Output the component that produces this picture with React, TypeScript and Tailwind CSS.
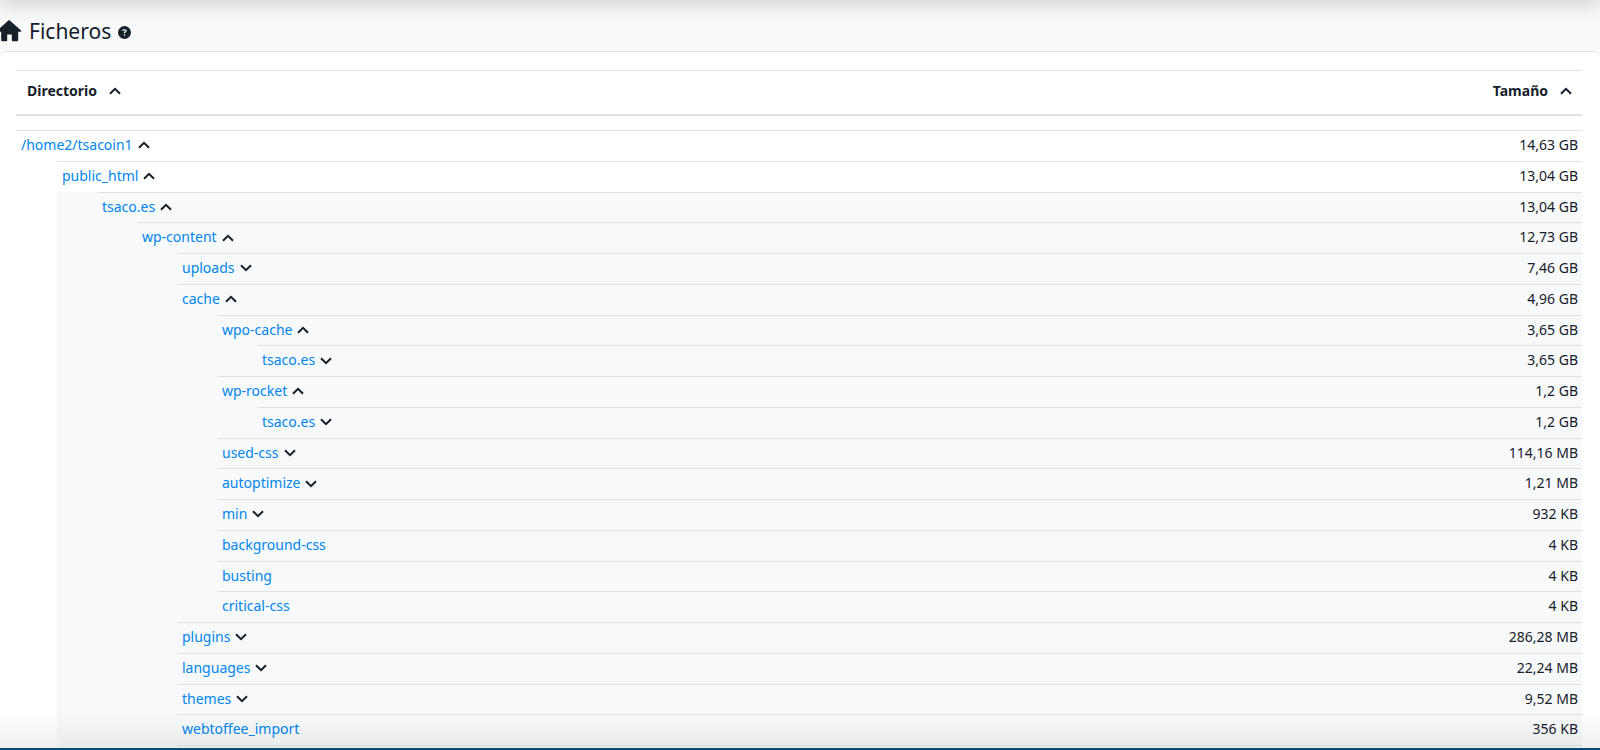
import React from 'react';
import { FaCircleQuestion } from 'react-icons/fa6';

type Entry = {
    name: string;
    size: string;
    depth: number;
    state?: 'open' | 'closed';
};

const entries: Entry[] = [
    { name: '/home2/tsacoin1', size: '14,63 GB', depth: 0, state: 'open' },
    { name: 'public_html', size: '13,04 GB', depth: 1, state: 'open' },
    { name: 'tsaco.es', size: '13,04 GB', depth: 2, state: 'open' },
    { name: 'wp-content', size: '12,73 GB', depth: 3, state: 'open' },
    { name: 'uploads', size: '7,46 GB', depth: 4, state: 'closed' },
    { name: 'cache', size: '4,96 GB', depth: 4, state: 'open' },
    { name: 'wpo-cache', size: '3,65 GB', depth: 5, state: 'open' },
    { name: 'tsaco.es', size: '3,65 GB', depth: 6, state: 'closed' },
    { name: 'wp-rocket', size: '1,2 GB', depth: 5, state: 'open' },
    { name: 'tsaco.es', size: '1,2 GB', depth: 6, state: 'closed' },
    { name: 'used-css', size: '114,16 MB', depth: 5, state: 'closed' },
    { name: 'autoptimize', size: '1,21 MB', depth: 5, state: 'closed' },
    { name: 'min', size: '932 KB', depth: 5, state: 'closed' },
    { name: 'background-css', size: '4 KB', depth: 5 },
    { name: 'busting', size: '4 KB', depth: 5 },
    { name: 'critical-css', size: '4 KB', depth: 5 },
    { name: 'plugins', size: '286,28 MB', depth: 4, state: 'closed' },
    { name: 'languages', size: '22,24 MB', depth: 4, state: 'closed' },
    { name: 'themes', size: '9,52 MB', depth: 4, state: 'closed' },
    { name: 'webtoffee_import', size: '356 KB', depth: 4 },
];

const indents = ['ml-0', 'ml-[41px]', 'ml-10', 'ml-20', 'ml-30', 'ml-40', 'ml-50'];

const Chevron: React.FC<{ down?: boolean }> = ({ down }) => (
    <svg viewBox="0 0 12 8" className="w-3 h-2" fill="none" stroke="currentColor" strokeWidth="2">
        <path d={down ? 'M1 1.2 6 6.2 11 1.2' : 'M1 6.8 6 1.8 11 6.8'} />
    </svg>
);

const EntryRow: React.FC<{ entry: Entry }> = ({ entry }) => {
    // everything below public_html sits on the grey block
    const shaded = entry.depth >= 2;

    return (
        <tr className="leading-relaxed">
            <td className="p-0">
                <div className={shaded ? 'ml-[41px] bg-[#f8f9fa]' : ''}>
                    <div
                        className={`flex items-center gap-1 border-t border-[#dee2e6] pt-[3px] pb-1 pl-[5px] ${indents[entry.depth]}`}
                    >
                        <a href="#" className="text-[#0086ee]">
                            {entry.name}
                        </a>
                        {entry.state && (
                            <button
                                type="button"
                                aria-label={entry.state === 'open' ? 'Contraer' : 'Expandir'}
                                className="px-px"
                            >
                                <Chevron down={entry.state === 'closed'} />
                            </button>
                        )}
                    </div>
                </div>
            </td>
            <td
                className={`border-t border-[#dee2e6] pt-[3px] pb-1 pr-1 text-right ${
                    shaded ? 'bg-[#f8f9fa]' : ''
                }`}
            >
                {entry.size}
            </td>
        </tr>
    );
};

const App: React.FC = () => {
    return (
        <div className="relative flex flex-col h-screen overflow-hidden bg-[#f8f9fa] font-['Noto_Sans',sans-serif] text-sm text-[#16202a]">
            {/* shadow of the bar above */}
            <div className="absolute inset-x-0 -top-20 h-20 shadow-[0_8px_16px_rgba(0,0,0,0.12)]" />

            <header className="flex items-center gap-[7px] h-[51px] pt-[10px] shrink-0">
                <svg viewBox="0 0 22 22" className="w-[22px] h-[22px]" fill="currentColor">
                    <path d="M9.8 0.4a1 1 0 0 0-1.4 0L0 8v3.8h1.2V20a1.2 1.2 0 0 0 1.2 1.2h3.8a1 1 0 0 0 1-1V14.5h4.6v5.7a1 1 0 0 0 1 1h4.2a1.2 1.2 0 0 0 1.2-1.2v-8.2h2.4a.7.7 0 0 0 .5-1.2z" />
                </svg>
                <h1 className="text-[21px]">Ficheros</h1>
                <button type="button" aria-label="Ayuda" className="pt-1">
                    <FaCircleQuestion className="w-[13px] h-[13px]" />
                </button>
            </header>

            <main className="flex-1 min-h-0 overflow-hidden rounded-t-md border-t border-[#dee2e6] bg-white pl-4 pr-[18px] pt-[18px]">
                <table className="w-full border-separate border-spacing-0">
                    <thead>
                        <tr>
                            <th className="h-[46px] border-t border-b-2 border-[#dee2e6] pb-[3px] pl-[11px] pr-0 text-left font-bold">
                                <button type="button" className="flex items-center gap-3 font-bold">
                                    Directorio <Chevron />
                                </button>
                            </th>
                            <th className="border-t border-b-2 border-[#dee2e6] pb-[3px] pr-[10px] font-bold">
                                <button type="button" className="ml-auto flex items-center gap-3 font-bold">
                                    Tamaño <Chevron />
                                </button>
                            </th>
                        </tr>
                        <tr>
                            <td colSpan={2} className="h-[14px] p-0" />
                        </tr>
                    </thead>
                    <tbody>
                        {entries.map((entry, i) => (
                            <EntryRow key={i} entry={entry} />
                        ))}
                        <tr>
                            <td className="p-0">
                                <div className="ml-[41px] bg-[#f8f9fa]">
                                    <div className="ml-30 h-8 border-t border-[#dee2e6]" />
                                </div>
                            </td>
                            <td className="border-t border-[#dee2e6] bg-[#f8f9fa]" />
                        </tr>
                    </tbody>
                </table>
            </main>

            <div className="absolute inset-x-0 bottom-0 h-10 border-b-2 border-[#004b70] bg-linear-to-b from-transparent to-black/6" />
        </div>
    );
};

export default App;
